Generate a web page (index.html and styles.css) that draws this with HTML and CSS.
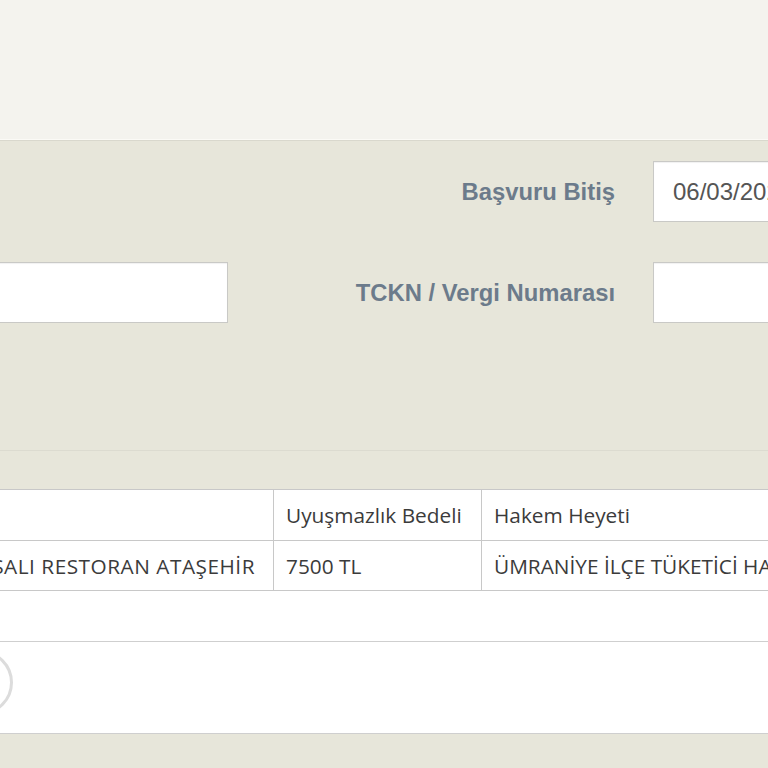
FILE: index.html
```html
<!DOCTYPE html>
<html lang="tr">
<head>
<meta charset="utf-8">
<title>Başvuru Sorgulama</title>
<link rel="stylesheet" href="styles.css">
</head>
<body>
<div class="page">
  <header class="top"></header>
  <section class="filter">
    <div class="form-grid">
      <div class="cell"></div>
      <label class="lbl" for="bitis">Başvuru Bitiş</label>
      <input class="inp" id="bitis" type="text" value="06/03/2024">
      <input class="inp" id="unvan" type="text" value="">
      <label class="lbl" for="tckn">TCKN / Vergi Numarası</label>
      <input class="inp" id="tckn" type="text" value="">
    </div>
  </section>
  <div class="spacer"></div>
  <section class="results">
    <table class="grid">
      <colgroup>
        <col class="c1"><col class="c2"><col class="c3">
      </colgroup>
      <thead>
        <tr><th>Karşı Taraf</th><th>Uyuşmazlık Bedeli</th><th>Hakem Heyeti</th></tr>
      </thead>
      <tbody>
        <tr><td class="end">GÜNEŞ MASALI RESTORAN ATAŞEHİR</td><td>7500 TL</td><td>ÜMRANİYE İLÇE TÜKETİCİ HAKEM HEYETİ</td></tr>
      </tbody>
    </table>
    <div class="pager"></div>
    <div class="loading"><span class="ring"></span></div>
  </section>
</div>
</body>
</html>
```
FILE: styles.css
```css
html, body {
  margin: 0;
  padding: 0;
  overflow: hidden;
  background: #e7e6da;
}
.page {
  width: 768px;
  font-family: "Liberation Sans", Arial, sans-serif;
}
.top {
  height: 139px;
  background: #f4f3ee;
  border-bottom: 1px solid #fbfaf6;
}
.filter {
  background: #e7e6da;
  border-top: 1px solid #d9d8cd;
  border-bottom: 1px solid #dcdbd0;
  padding: 20px 0 127px;
}
.form-grid {
  display: grid;
  grid-template-columns: 428px 425px 320px;
  grid-auto-rows: 61px;
  row-gap: 40px;
  margin-left: -200px;
}
.lbl {
  align-self: center;
  text-align: right;
  padding-right: 38px;
  font-weight: bold;
  font-size: 23.8px;
  color: #6c7b8b;
}
.inp {
  box-sizing: border-box;
  width: 100%;
  height: 61px;
  margin: 0;
  border: 1px solid #c9c9c6;
  background: #fff;
  box-shadow: inset 0 1px 1px rgba(0, 0, 0, 0.06);
  padding: 0 0 0 19px;
  font-family: "Liberation Sans", Arial, sans-serif;
  font-size: 24px;
  color: #555;
  outline: none;
}
.spacer {
  height: 38px;
}
.results {
  background: #fff;
}
.grid {
  border-collapse: collapse;
  table-layout: fixed;
  width: 1208px;
  margin-left: -227px;
  font-family: "Open Sans", "Noto Sans", sans-serif;
  font-size: 20.8px;
  color: #3b3b3b;
}
.c1 { width: 500px; }
.c2 { width: 208px; }
.c3 { width: 500px; }
.grid th, .grid td {
  border: 1px solid #c8c8c8;
  text-align: left;
  font-weight: normal;
  padding: 0 12px;
  white-space: nowrap;
  overflow: hidden;
}
.grid th { height: 50px; }
.grid td { height: 49px; }
.grid td.end {
  text-align: right;
  padding-right: 18px;
  letter-spacing: 0.5px;
}
.pager {
  height: 50px;
  border-bottom: 1px solid #cfcfcf;
}
.loading {
  height: 92px;
  border-bottom: 1px solid #cfcfcf;
  padding-top: 8px;
  box-sizing: border-box;
}
.ring {
  display: block;
  box-sizing: border-box;
  width: 65px;
  height: 65px;
  margin-left: -52px;
  border: 3px solid #dcdcdc;
  border-radius: 50%;
}
```
